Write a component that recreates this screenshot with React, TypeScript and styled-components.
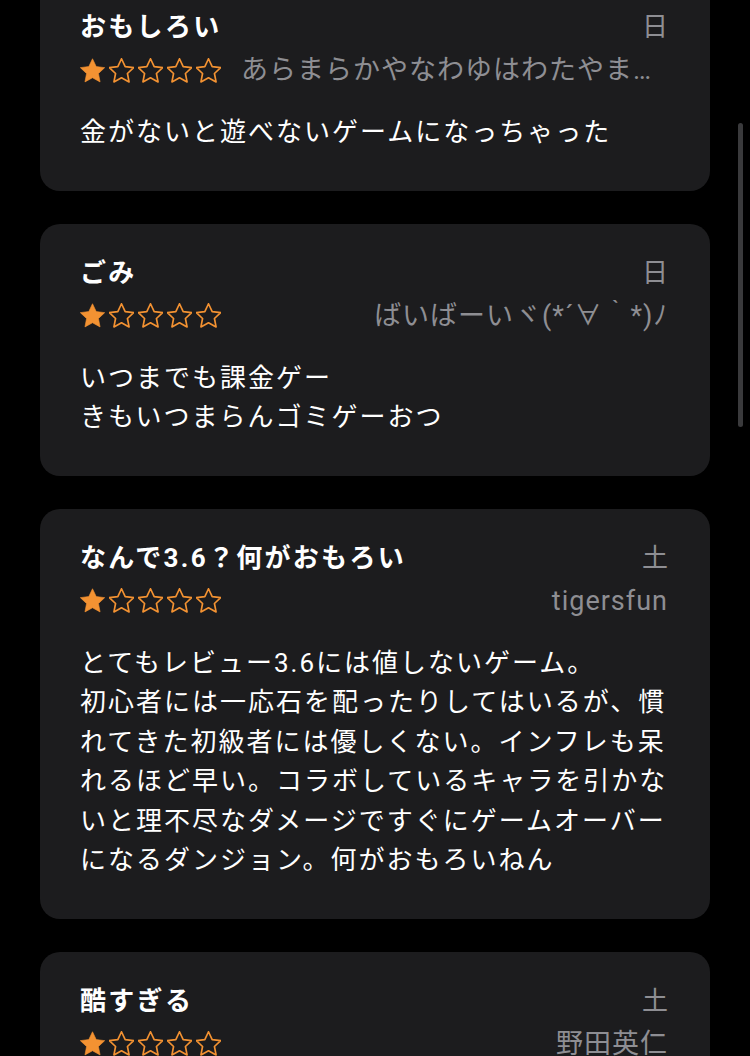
import React from "react";
import styled, { createGlobalStyle } from "styled-components";

const GlobalStyle = createGlobalStyle`
  html, body {
    margin: 0;
    padding: 0;
    background: #000;
  }
  body {
    font-family: "Roboto", "Noto Sans CJK JP", sans-serif;
    -webkit-font-smoothing: antialiased;
  }
`;

const Page = styled.div`
  display: flex;
  flex-direction: column;
  gap: 33px;
  padding: 0 40px 40px;
  margin-top: -22px;
`;

const Card = styled.section`
  background: #1c1c1e;
  border-radius: 20px;
  padding: 34px 40px 38px 40px;
`;

const HeaderRow = styled.div`
  display: flex;
  justify-content: space-between;
  align-items: center;
  height: 30px;
  padding-right: 2px;
`;

const Title = styled.h3`
  margin: 0;
  font-size: 26px;
  font-weight: 700;
  letter-spacing: 2.3px;
  line-height: 30px;
  color: #ffffff;
`;

const Day = styled.span`
  font-size: 26px;
  line-height: 30px;
  color: #8e8e93;
`;

const MetaRow = styled.div`
  display: flex;
  align-items: center;
  gap: 20px;
  margin-top: 14px;
  height: 28px;
  padding-right: 2px;
`;

const Stars = styled.div`
  display: flex;
  gap: 4px;
  flex-shrink: 0;
`;

const Author = styled.span`
  flex: 1;
  min-width: 0;
  text-align: right;
  white-space: nowrap;
  overflow: hidden;
  text-overflow: ellipsis;
  font-size: 27px;
  letter-spacing: 1px;
  line-height: 32px;
  color: #8e8e93;
`;

const Body = styled.p`
  margin: 29px 0 0;
  font-size: 26px;
  letter-spacing: 2px;
  line-height: 39.5px;
  color: #ffffff;
  white-space: pre-wrap;
`;

const ScrollThumb = styled.div`
  position: fixed;
  top: 123px;
  right: 7px;
  width: 5px;
  height: 304px;
  border-radius: 3px;
  background: #3a3a3c;
`;

const STAR = "M12 2.2l2.95 6.25 6.8.85-5 4.7 1.3 6.75L12 17.4l-6.05 3.35 1.3-6.75-5-4.7 6.8-.85z";

const Star: React.FC<{ filled: boolean }> = ({ filled }) => (
  <svg width="25" height="25" viewBox="2 1.6 20 20" aria-hidden="true">
    <path
      d={STAR}
      fill={filled ? "#f39232" : "none"}
      stroke="#f39232"
      strokeWidth={filled ? 0.5 : 1.35}
      strokeLinejoin="round"
    />
  </svg>
);

type Review = {
  title: string;
  day: string;
  rating: number;
  author: string;
  body: string;
};

const reviews: Review[] = [
  {
    title: "おもしろい",
    day: "日",
    rating: 1,
    author: "あらまらかやなわゆはわたやまなかはまやらわ",
    body: "金がないと遊べないゲームになっちゃった",
  },
  {
    title: "ごみ",
    day: "日",
    rating: 1,
    author: "ばいばーいヾ(*´∀｀*)ﾉ",
    body: "いつまでも課金ゲー\nきもいつまらんゴミゲーおつ",
  },
  {
    title: "なんで3.6？何がおもろい",
    day: "土",
    rating: 1,
    author: "tigersfun",
    body:
      "とてもレビュー3.6には値しないゲーム。\n初心者には一応石を配ったりしてはいるが、慣れてきた初級者には優しくない。インフレも呆れるほど早い。コラボしているキャラを引かないと理不尽なダメージですぐにゲームオーバーになるダンジョン。何がおもろいねん",
  },
  {
    title: "酷すぎる",
    day: "土",
    rating: 1,
    author: "野田英仁",
    body: "課金しないと何もできない。",
  },
];

export default function App() {
  return (
    <>
      <GlobalStyle />
      <Page>
        {reviews.map((r, i) => (
          <Card key={i}>
            <HeaderRow>
              <Title>{r.title}</Title>
              <Day>{r.day}</Day>
            </HeaderRow>
            <MetaRow>
              <Stars>
                {[0, 1, 2, 3, 4].map((s) => (
                  <Star key={s} filled={s < r.rating} />
                ))}
              </Stars>
              <Author>{r.author}</Author>
            </MetaRow>
            <Body>{r.body}</Body>
          </Card>
        ))}
      </Page>
      <ScrollThumb />
    </>
  );
}
